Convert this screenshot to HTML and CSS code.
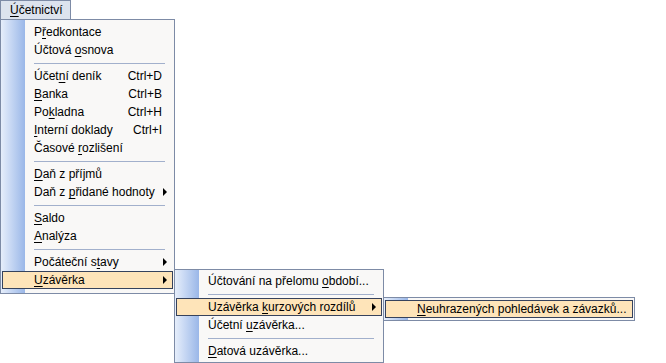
FILE: index.html
```html
<!DOCTYPE html>
<html lang="cs">
<head>
    <meta charset="UTF-8">
    <title>Účetnictví</title>
    <link rel="stylesheet" href="styles.css">
</head>
<body>
    <div class="menubar">
        <div class="menu-title"><u>Ú</u>četnictví</div>
    </div>

    <div class="menu main-menu">
        <div class="item"><span class="label">P<u>ř</u>edkontace</span></div>
        <div class="item"><span class="label">Účtová <u>o</u>snova</span></div>
        <div class="separator"></div>
        <div class="item"><span class="label">Účet<u>n</u>í deník</span><span class="shortcut">Ctrl+D</span></div>
        <div class="item"><span class="label"><u>B</u>anka</span><span class="shortcut">Ctrl+B</span></div>
        <div class="item"><span class="label">Po<u>k</u>ladna</span><span class="shortcut">Ctrl+H</span></div>
        <div class="item"><span class="label"><u>I</u>nterní doklady</span><span class="shortcut">Ctrl+I</span></div>
        <div class="item"><span class="label">Časové <u>r</u>ozlišení</span></div>
        <div class="separator"></div>
        <div class="item"><span class="label"><u>D</u>aň z příjmů</span></div>
        <div class="item"><span class="label">Daň z <u>p</u>řidané hodnoty</span><span class="arrow"></span></div>
        <div class="separator"></div>
        <div class="item"><span class="label"><u>S</u>aldo</span></div>
        <div class="item"><span class="label"><u>A</u>nalýza</span></div>
        <div class="separator"></div>
        <div class="item"><span class="label">Počáteční s<u>t</u>avy</span><span class="arrow"></span></div>
        <div class="item active"><span class="label"><u>U</u>závěrka</span><span class="arrow"></span>

            <!-- submenu Uzávěrka -->
            <div class="menu submenu closing-menu">
                <div class="item"><span class="label">Účtování na přelomu <u>o</u>bdobí...</span></div>
                <div class="separator"></div>
                <div class="item active"><span class="label">Uzávěrka <u>k</u>urzových rozdílů</span><span class="arrow"></span>

                    <div class="menu submenu rates-menu">
                        <div class="item active"><span class="label"><u>N</u>euhrazených pohledávek a závazků...</span></div>
                    </div>
                </div>
                <div class="item"><span class="label">Účetní <u>u</u>závěrka...</span></div>
                <div class="separator"></div>
                <div class="item"><span class="label"><u>D</u>atová uzávěrka...</span></div>
            </div>
        </div>
    </div>
</body>
</html>
```

FILE: styles.css
```css
:root {
    --menu-bg: #f9f8f7;
    --menu-border: #7d8ba6;
    --title-bg: #dce3ee;
    --sep-color: #a2b0cc;
    --hover-bg: #fee4b9;
    --hover-border: #36425c;
}

* {
    margin: 0;
    padding: 0;
    box-sizing: border-box;
}

html, body {
    min-height: 100vh;
}

body {
    font-family: "Liberation Sans", Arial, sans-serif;
    font-size: 12px;
    color: #000;
    background-color: #fff;
}

u {
    text-decoration: underline;
    text-underline-offset: 2px;
}

.menubar {
    display: flex;
    height: 19px;
}

.menu-title {
    width: 71px;
    height: 19px;
    padding: 2px 0 0 9px;
    line-height: 15px;
    background-color: var(--title-bg);
    border: 1px solid var(--menu-border);
    border-bottom: none;
}

.menu {
    background:
        linear-gradient(to right, #e6eefb, #9ab7e8) 0 0 / 24px 100% no-repeat,
        var(--menu-bg);
    border: 1px solid var(--menu-border);
}

.main-menu {
    width: 175px;
    padding: 3px 0 4px;
}

.item {
    position: relative;
    display: flex;
    align-items: center;
    height: 18px;
    margin: 0 1px;
    padding: 0 5px 0 31px;
    border: 1px solid transparent;
    white-space: nowrap;
}

.item.active {
    background-color: var(--hover-bg);
    border-color: var(--hover-border);
}

.label {
    flex: 1;
}

.shortcut {
    margin-right: 5px;
}

.arrow {
    width: 0;
    height: 0;
    border-style: solid;
    border-width: 4px 0 4px 4px;
    border-color: transparent transparent transparent #000;
}

.separator {
    height: 1px;
    margin: 4px 9px 3px 33px;
    background-color: var(--sep-color);
}

.submenu {
    position: absolute;
    top: -3px;
    left: calc(100% + 2px);
    padding: 2px 0;
}

.closing-menu {
    width: 210px;
}

.rates-menu {
    top: -2px;
    width: 252px;
}
```
